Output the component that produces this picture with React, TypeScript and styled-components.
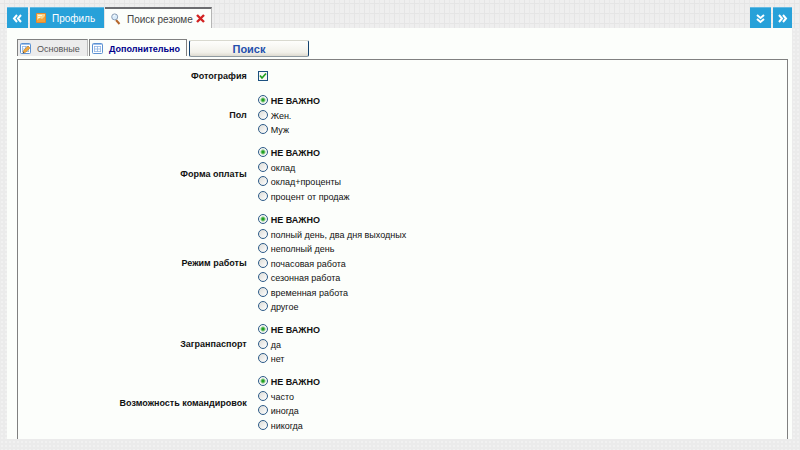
import React, { useState } from "react";
import styled, { createGlobalStyle } from "styled-components";

const GlobalStyle = createGlobalStyle`
  * { box-sizing: border-box; }
  body {
    margin: 0;
    background-color: #ebebeb;
    background-image: radial-gradient(circle, #f1f1f1 1px, transparent 1px);
    background-size: 4px 4px;
    font-family: "Liberation Sans", Arial, sans-serif;
    font-size: 9px;
    color: #111;
  }
  button, input { font-family: inherit; margin: 0; }
`;

const Page = styled.div`
  min-height: 100vh;
  display: flex;
  flex-direction: column;
  padding-bottom: 11px;
`;

const TopBar = styled.header`
  display: flex;
  align-items: flex-end;
  justify-content: space-between;
  height: 28px;
  padding: 0 8px 0 7px;
  background-color: #eeeeee;
  background-image:
    repeating-linear-gradient(90deg, transparent 0 4px, #e5e5e5 4px 5px, transparent 5px 9px, #e9e9e9 9px 10px),
    repeating-linear-gradient(0deg, transparent 0 4px, #e5e5e5 4px 5px, #efefef 5px 10px);
`;

const BarGroup = styled.div`
  display: flex;
  gap: 2px;
`;

const TabStrip = styled.div`
  display: flex;
  gap: 1px;
`;

const SquareButton = styled.button<{ $narrow?: boolean }>`
  display: flex;
  align-items: center;
  justify-content: center;
  width: ${(p) => (p.$narrow ? "19px" : "21px")};
  height: 21px;
  padding: 0;
  border: 0;
  border-top: 1px solid #63b9e2;
  background: #27a1d9;
  color: #fff;
`;

const PageTab = styled.div<{ $active?: boolean }>`
  display: flex;
  align-items: center;
  height: 21px;
  padding: 0 6px;
  border-top: ${(p) => (p.$active ? "2px solid #6c6c70" : "1px solid #63b9e2")};
  border-right: ${(p) => (p.$active ? "1px solid #b5b5b5" : "0")};
  background: ${(p) => (p.$active ? "#fcfefb" : "#27a1d9")};
  color: ${(p) => (p.$active ? "#444" : "#fff")};
  width: ${(p) => (p.$active ? "107px" : "74px")};
`;

const TabButton = styled.button`
  display: flex;
  align-items: center;
  gap: 6px;
  flex: 1;
  padding: 0;
  border: 0;
  background: none;
  color: inherit;
  font-size: 10px;
  white-space: nowrap;
`;

const TabText = styled.span`
  padding-top: 2px;
  line-height: 14px;
`;

const CloseButton = styled.button`
  display: flex;
  padding: 0;
  border: 0;
  background: none;
`;

const Sheet = styled.main`
  flex: 1;
  display: flex;
  flex-direction: column;
  margin: 0 8px 0 7px;
  padding: 11px 4px 0 10px;
  background: #fcfefb;
`;

const Toolbar = styled.div`
  display: flex;
  align-items: flex-start;
  gap: 1px;
  height: 20px;
`;

const SubTab = styled.button<{ $active?: boolean }>`
  display: flex;
  align-items: center;
  gap: 6px;
  height: 17px;
  padding: 0 2px;
  border: 1px solid #808080;
  border-bottom: 0;
  border-right-color: ${(p) => (p.$active ? "#808080" : "#bbb")};
  background: ${(p) => (p.$active ? "#fcfefb" : "#ececec")};
  color: ${(p) => (p.$active ? "#00008b" : "#555")};
  font-size: 9px;
  font-weight: ${(p) => (p.$active ? "bold" : "normal")};
  white-space: nowrap;
  width: ${(p) => (p.$active ? "98px" : "71px")};
`;

const SearchButton = styled.button`
  width: 120px;
  height: 17px;
  margin: 1px 0 0 1px;
  padding: 0;
  border: 1px solid #14426f;
  border-top-color: #d9d9cf;
  border-bottom-color: #8f9aa0;
  border-radius: 2px;
  background: linear-gradient(#fefefc, #f2f1ea 75%, #dedbd0);
  color: #2450ad;
  font-size: 11px;
  font-weight: bold;
  line-height: 16px;
`;

const Panel = styled.form`
  flex: 1;
  display: flex;
  flex-direction: column;
  gap: 9px;
  padding: 8px 0 4px;
  border: 1px solid #808080;
  border-bottom: 0;
`;

const Field = styled.div`
  display: grid;
  grid-template-columns: 30% 1fr;
  gap: 9px;
  align-items: center;
`;

const FieldName = styled.label`
  padding-right: 2px;
  text-align: right;
  font-size: 9px;
  font-weight: bold;
  line-height: 14px;
`;

const CheckCell = styled.div`
  display: flex;
  align-items: center;
  height: 16px;
`;

const Options = styled.div`
  display: flex;
  flex-direction: column;
`;

const Option = styled.label<{ $strong?: boolean }>`
  display: flex;
  align-items: center;
  gap: 3px;
  height: 14px;
  font-weight: ${(p) => (p.$strong ? "bold" : "normal")};
  &:nth-child(even) { height: 15px; }
`;

const OptionText = styled.span`
  padding-top: 3px;
  line-height: 11px;
`;

const Radio = styled.input`
  appearance: none;
  width: 10px;
  height: 10px;
  border: 1px solid #2d5b88;
  border-radius: 50%;
  background: linear-gradient(135deg, #dcdcd7, #fff);
  &:checked { background: radial-gradient(circle, #21a121 0 1px, #f4f6f2 3px); }
`;

const Check = styled.input`
  appearance: none;
  width: 10px;
  height: 10px;
  border: 1px solid #1c5180;
  background: #f7f8f5 url("data:image/svg+xml,%3Csvg xmlns='http://www.w3.org/2000/svg' viewBox='0 0 8 8'%3E%3Cpath d='M1 3.5 3 6 7 1.5' fill='none' stroke='%2321a121' stroke-width='1.7'/%3E%3C/svg%3E");
  &:not(:checked) { background: #f7f8f5; }
`;

const Chevrons = ({ turn }: { turn: number }) => (
  <svg width="11" height="11" viewBox="0 0 11 11" aria-hidden="true">
    <path d="M2 2 5 5.5 2 9M6 2 9 5.5 6 9" transform={`rotate(${turn} 5.5 5.5)`} fill="none" stroke="#fff" strokeWidth="2" />
  </svg>
);

const ProfileIcon = () => (
  <svg width="10" height="10" viewBox="0 0 10 10" aria-hidden="true">
    <rect width="10" height="10" rx="1" fill="#e8892c" />
    <rect x="1" y="1" width="8" height="8" fill="#f9d58a" />
    <path d="M1 7 4 5 6 6 9 3V9H1Z" fill="#f2a33a" />
    <path d="M2 2.5h4M2 4.5h2" stroke="#fff6da" />
  </svg>
);

const LensIcon = () => (
  <svg width="10" height="12" viewBox="0 0 10 12" aria-hidden="true">
    <path d="m5 7 3.5 4" stroke="#b5672c" strokeWidth="2" />
    <circle cx="3.7" cy="3.9" r="3" fill="#d9ecfa" stroke="#8c9eb5" />
    <path d="M2.3 3.5q.4-1.2 1.6-1.3" stroke="#fff" fill="none" />
  </svg>
);

const TableIcon = ({ pencil }: { pencil?: boolean }) => (
  <svg width="11" height="11" viewBox="0 0 11 11" aria-hidden="true">
    <rect x=".5" y=".5" width="10" height="10" rx="1" fill="#fff" stroke="#5c92d2" />
    <path d="M1 1.5h9" stroke="#9fc2ec" />
    <path d="M2 3.5h7M2 6h7M2 8.5h7M2.5 3v6M5.5 3v6M8.5 3v6" stroke="#8fb5e2" strokeWidth=".8" />
    {pencil && (
      <g>
        <path d="m3 10 .6-2.6L8 3l2 2-4.4 4.3Z" fill="#f0a73c" stroke="#b9761d" strokeWidth=".5" />
        <path d="m3 10 .3-1.3 1 1Z" fill="#333" />
      </g>
    )}
  </svg>
);

const CloseIcon = () => (
  <svg width="9" height="9" viewBox="0 0 9 9" aria-hidden="true">
    <path d="m1 1 7 7M8 1 1 8" stroke="#d22323" strokeWidth="2.4" />
  </svg>
);

const groups = [
  { id: "sex", name: "Пол", options: ["Жен.", "Муж"] },
  { id: "pay", name: "Форма оплаты", options: ["оклад", "оклад+проценты", "процент от продаж"] },
  {
    id: "mode",
    name: "Режим работы",
    options: ["полный день, два дня выходных", "неполный день", "почасовая работа", "сезонная работа", "временная работа", "другое"],
  },
  { id: "passport", name: "Загранпаспорт", options: ["да", "нет"] },
  { id: "trips", name: "Возможность командировок", options: ["часто", "иногда", "никогда"] },
];

const RadioField = ({ id, name, options }: { id: string; name: string; options: string[] }) => {
  const [value, setValue] = useState(0);
  return (
    <Field role="radiogroup" aria-labelledby={`${id}-name`}>
      <FieldName as="span" id={`${id}-name`}>{name}</FieldName>
      <Options>
        {["НЕ ВАЖНО", ...options].map((text, i) => (
          <Option key={text} $strong={i === 0}>
            <Radio type="radio" name={id} checked={value === i} onChange={() => setValue(i)} />
            <OptionText>{text}</OptionText>
          </Option>
        ))}
      </Options>
    </Field>
  );
};

export default function App() {
  return (
    <Page>
      <GlobalStyle />
      <TopBar>
        <BarGroup>
          <SquareButton aria-label="Назад"><Chevrons turn={180} /></SquareButton>
          <TabStrip>
            <PageTab><TabButton><ProfileIcon /><TabText>Профиль</TabText></TabButton></PageTab>
            <PageTab $active>
              <TabButton><LensIcon /><TabText>Поиск резюме</TabText></TabButton>
              <CloseButton aria-label="Закрыть"><CloseIcon /></CloseButton>
            </PageTab>
          </TabStrip>
        </BarGroup>
        <BarGroup>
          <SquareButton aria-label="Список"><Chevrons turn={90} /></SquareButton>
          <SquareButton $narrow aria-label="Вперёд"><Chevrons turn={0} /></SquareButton>
        </BarGroup>
      </TopBar>
      <Sheet>
        <Toolbar>
          <SubTab><TableIcon pencil /><TabText>Основные</TabText></SubTab>
          <SubTab $active><TableIcon /><TabText>Дополнительно</TabText></SubTab>
          <SearchButton type="submit" form="search">Поиск</SearchButton>
        </Toolbar>
        <Panel id="search" onSubmit={(e) => e.preventDefault()}>
          <Field>
            <FieldName htmlFor="photo">Фотография</FieldName>
            <CheckCell><Check id="photo" type="checkbox" defaultChecked /></CheckCell>
          </Field>
          {groups.map((g) => <RadioField key={g.id} {...g} />)}
        </Panel>
      </Sheet>
    </Page>
  );
}
